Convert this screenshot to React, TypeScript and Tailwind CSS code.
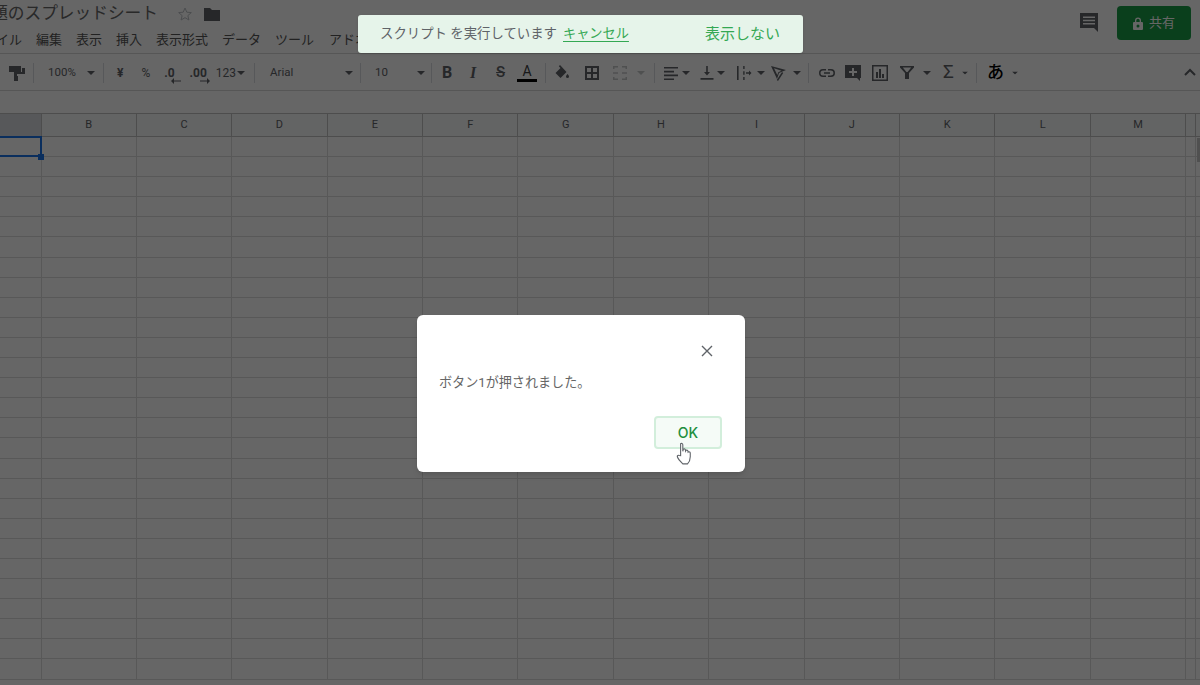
const columns = ["B", "C", "D", "E", "F", "G", "H", "I", "J", "K", "L", "M"];
const rowCount = 27;

function Caret({ className = "" }: { className?: string }) {
  return (
    <svg width="8" height="4" viewBox="0 0 8 4" className={`shrink-0 ${className}`}>
      <path d="M0 0h8L4 4z" fill="currentColor" />
    </svg>
  );
}

function Divider() {
  return <div className="w-px h-[20px] bg-[#dadce0] shrink-0" />;
}

function Glyph({ children }: { children: React.ReactNode }) {
  return (
    <svg width="18" height="18" viewBox="0 0 18 18" className="shrink-0" fill="#5f6368">
      {children}
    </svg>
  );
}

function MenuBar() {
  return (
    <div className="flex items-center h-[26px] text-[13px] text-[#555555] gap-[14px] whitespace-nowrap">
      <span className="w-[22px] overflow-hidden flex justify-end">イル</span>
      <span>編集</span>
      <span>表示</span>
      <span>挿入</span>
      <span>表示形式</span>
      <span>データ</span>
      <span className="mr-[1px]">ツール</span>
      <span>アドオン</span>
    </div>
  );
}

function Toolbar() {
  return (
    <div className="flex items-center h-[38px] pt-[1px] border-t border-b border-[#d8d8d8] text-[#5f6368] text-[11px] relative whitespace-nowrap">
      <div className="w-[33px] flex justify-end pr-[7px]">
        <Glyph>
          <path d="M1 2h12v6H1zM14 4h3v6H9v2h1v5H6v-9h8z" />
        </Glyph>
      </div>
      <Divider />
      <span className="ml-[14px] w-[36px] text-[11.500px]">100%</span>
      <Caret className="ml-[3px]" />
      <div className="ml-[8px]"><Divider /></div>
      <span className="ml-[13px] text-[12px] font-bold">¥</span>
      <span className="ml-[18px] text-[12px]">%</span>
      <span className="ml-[14px] relative text-[12px] font-bold">
        .0
        <svg width="10" height="6" viewBox="0 0 10 6" className="absolute left-[7px] top-[14px]">
          <path d="M10 2.400H3V0L0 3l3 3V3.600h7z" fill="#5f6368" />
        </svg>
      </span>
      <span className="ml-[15px] relative text-[12px] font-bold">
        .00
        <svg width="10" height="6" viewBox="0 0 10 6" className="absolute left-[10px] top-[14px]">
          <path d="M0 2.400h7V0l3 3-3 3V3.600H0z" fill="#5f6368" />
        </svg>
      </span>
      <span className="ml-[9px] text-[12px]">123</span>
      <Caret className="ml-[1px]" />
      <div className="ml-[9px]"><Divider /></div>
      <span className="ml-[15px] w-[75px] text-[11.500px]">Arial</span>
      <Caret />
      <div className="ml-[7px]"><Divider /></div>
      <span className="ml-[14px] w-[42px] text-[11.500px]">10</span>
      <Caret />
      <div className="ml-[6px]"><Divider /></div>
      <span className="ml-[10px] text-[16px] font-bold w-[14px]">B</span>
      <span className="ml-[14px] text-[16px] italic font-bold w-[12px]" style={{ fontFamily: "Liberation Serif" }}>I</span>
      <span className="ml-[14px] text-[15px] font-medium line-through w-[13px]">S</span>
      <div className="ml-[8px] flex flex-col items-center w-[20px]">
        <span className="text-[14px] leading-[14px] text-[#3c4043]">A</span>
        <div className="w-[20px] h-[3px] bg-black mt-[1px]" />
      </div>
      <div className="ml-[8px]"><Divider /></div>
      <div className="ml-[7px]">
        <Glyph>
          <path d="M7 1 5.800 2.200 7.500 4 2.500 9l5 5 6-6zM14.500 10c1 1.300 1.500 2 1.500 2.600a1.500 1.500 0 0 1-3 0c0-.6.500-1.300 1.500-2.600z" />
        </Glyph>
      </div>
      <div className="ml-[12px]">
        <Glyph>
          <path d="M2 2h14v14H2zm2 2v4h4V4zm6 0v4h4V4zM4 10v4h4v-4zm6 0v4h4v-4z" fillRule="evenodd" />
        </Glyph>
      </div>
      <div className="ml-[10px] opacity-35">
        <Glyph>
          <path d="M2 2h5v1.500H3.500V5H2zM11 2h5v3h-1.500V3.500H11zM2 13h1.500v1.500H7V16H2zM14.500 13H16v3h-5v-1.500h3.500zM2 8.300h5v1.400H2zM11 8.300h5v1.400h-5z" />
        </Glyph>
      </div>
      <Caret className="ml-[8px] opacity-35" />
      <div className="ml-[9px]"><Divider /></div>
      <div className="ml-[7px]">
        <Glyph>
          <path d="M2 3h14v1.600H2zM2 6.800h10v1.600H2zM2 10.600h14v1.600H2zM2 14.400h10V16H2z" />
        </Glyph>
      </div>
      <Caret className="ml-[2px]" />
      <div className="ml-[8px]">
        <Glyph>
          <path d="M8.200 2h1.600v6H12l-3 3.500L6 8h2.200zM2.500 14h13v1.800h-13z" />
        </Glyph>
      </div>
      <Caret className="ml-[1px]" />
      <div className="ml-[10px]">
        <Glyph>
          <path d="M2 2h1.600v14H2zM8.200 2h1.400v3H8.200zM8.200 13h1.400v3H8.200zM8.200 7.300h1.400v3.400H8.200zM11 8.200h3V6.500L16.500 9 14 11.500V9.800h-3z" />
        </Glyph>
      </div>
      <Caret className="ml-[4px]" />
      <div className="ml-[5px]">
        <Glyph>
          <path d="M1 2l15 4-7 3-2 6z M4 4.300 7.300 11l1-2.800 3.200-1.400z" fillRule="evenodd" />
          <path d="m12 8 1.200 1L8 17l-1.200-1z" />
        </Glyph>
      </div>
      <Caret className="ml-[5px]" />
      <div className="ml-[7px]"><Divider /></div>
      <div className="ml-[9px]">
        <Glyph>
          <path d="M2.500 9A2.500 2.500 0 0 1 5 6.500h3V5H5a4 4 0 0 0 0 8h3v-1.500H5A2.500 2.500 0 0 1 2.500 9zM6 9.800h6V8.200H6zM13 5h-3v1.500h3a2.500 2.500 0 0 1 0 5h-3V13h3a4 4 0 0 0 0-8z" />
        </Glyph>
      </div>
      <div className="ml-[8px]">
        <Glyph>
          <path d="M1 1h16v13h-1v3l-3-3H1zm7 3v3H5v2h3v3h2V9h3V7h-3V4z" fillRule="evenodd" />
        </Glyph>
      </div>
      <div className="ml-[9px]">
        <Glyph>
          <path d="M1 1h16v16H1zm1.500 1.500v13h13v-13zM5 8h2v6H5zM8 5h2v9H8zM11 10h2v4h-2z" fillRule="evenodd" />
        </Glyph>
      </div>
      <div className="ml-[10px]">
        <Glyph>
          <path d="M1 2h14v1.500L10 9v6H6V9L1 3.500zM3.800 3.500 7.400 8h1.200l3.600-4.500z" fillRule="evenodd" />
        </Glyph>
      </div>
      <Caret className="ml-[6px]" />
      <span className="ml-[12px] text-[19px] text-[#5f6368] w-[12px]">Σ</span>
      <Caret className="ml-[6px] scale-75" />
      <div className="ml-[7px]"><Divider /></div>
      <span className="ml-[10px] text-[17px] text-black font-medium w-[17px]">あ</span>
      <Caret className="ml-[7px] scale-75" />
      <svg width="12" height="8" viewBox="0 0 12 8" className="absolute right-[4px] top-[14px]">
        <path d="M1 7l5-5 5 5" stroke="#5f6368" strokeWidth="2" fill="none" />
      </svg>
    </div>
  );
}

function Grid() {
  return (
    <div className="relative">
      <div className="flex h-[24px] bg-[#f8f9fa] border-t border-b border-[#c0c0c0] text-[11px] text-[#5f6368]">
        <div className="w-[41.500px] shrink-0 bg-[#dadce0] border-r border-[#c0c0c0]" />
        {columns.map((c) => (
          <div
            key={c}
            className="w-[95.400px] shrink-0 border-r border-[#c0c0c0] flex items-center justify-center"
          >
            {c}
          </div>
        ))}
        <div className="w-[10px] shrink-0 border-r border-[#c0c0c0]" />
      </div>
      {Array.from({ length: rowCount }).map((_, i) => (
        <div key={i} className="flex h-[20.100px] border-b border-[#dcdcdc]">
          <div className="w-[41.500px] shrink-0 border-r border-[#dcdcdc]" />
          {columns.map((c) => (
            <div key={c} className="w-[95.400px] shrink-0 border-r border-[#dcdcdc]" />
          ))}
          <div className="w-[10px] shrink-0 border-r border-[#dcdcdc]" />
        </div>
      ))}
      {/* selected cell A1 */}
      <div className="absolute left-0 top-[23px] w-[42px] h-[21px] border-t-2 border-r-2 border-b-2 border-[#1a73e8]" />
      <div className="absolute left-[38px] top-[41px] w-[6px] h-[6px] bg-[#1a73e8]" />
      {/* scrollbar thumb */}
      <div className="absolute left-[1197px] top-[25px] w-[3px] h-[24px] bg-[#c8c8c8]" />
    </div>
  );
}

export default function App() {
  return (
    <div
      className="relative w-[1200px] h-[685px] overflow-hidden bg-white"
      style={{ fontFamily: '"Roboto", "Noto Sans CJK JP", sans-serif' }}
    >
      {/* header */}
      <div className="flex items-center h-[27px] relative">
        <span className="text-[16.700px] text-[#666666] whitespace-nowrap w-[158px] overflow-hidden flex justify-end">
          題のスプレッドシート
        </span>
        <svg width="16" height="16" viewBox="0 0 24 24" className="ml-[19px]" fill="none" stroke="#bdc1c6" strokeWidth="1.500">
          <path d="M12 3l2.700 6.300 6.800.6-5.200 4.500 1.600 6.600L12 17.500 6.100 21l1.600-6.600L2.500 9.900l6.800-.6z" />
        </svg>
        <svg width="18" height="16" viewBox="0 0 18 16" className="ml-[10px]" fill="#5f6368">
          <path d="M1 2h6l2 2h8v11H1z" />
        </svg>
        <svg width="20" height="20" viewBox="0 0 20 20" className="absolute left-[1079px] top-[12px]" fill="#5f6368">
          <path d="M1 1h18v19l-4-4H1zM4 4.500v1.500h12V4.500zM4 7.800v1.500h12V7.800zM4 11v1.500h12V11z" fillRule="evenodd" />
        </svg>
        <div className="absolute left-[1117px] top-[6px] w-[74px] h-[34px] rounded-[4px] bg-[#199d46] flex items-center justify-center gap-[6px] text-[13px] text-white">
          <svg width="10" height="13" viewBox="0 0 10 13" fill="white">
            <path d="M1 5h1V3.500a3 3 0 0 1 6 0V5h1a1 1 0 0 1 1 1v6a1 1 0 0 1-1 1H1a1 1 0 0 1-1-1V6a1 1 0 0 1 1-1zM3.300 5h3.400V3.500a1.700 1.700 0 0 0-3.400 0zM5 7.500a1.500 1.500 0 1 0 0 3 1.500 1.500 0 0 0 0-3z" fillRule="evenodd" />
          </svg>
          共有
        </div>
      </div>
      <MenuBar />
      <Toolbar />
      <div className="h-[22px]" />
      <Grid />

      {/* dim overlay */}
      <div className="absolute inset-0 bg-[rgba(0,0,0,0.6)]" />

      {/* script toast */}
      <div className="absolute left-[358px] top-[15px] w-[445px] h-[38px] bg-[#e6f4ea] rounded-[3px] flex items-center pl-[22px] text-[13.400px] text-[#5f6368] whitespace-nowrap shadow-sm">
        <span>スクリプト を実行しています</span>
        <span className="ml-[6px] text-[#34a853] underline underline-offset-[3px] text-[13.200px]">キャンセル</span>
        <span className="ml-[76px] text-[#34a853] text-[15px]">表示しない</span>
      </div>

      {/* dialog */}
      <div className="absolute left-[417px] top-[315px] w-[328px] h-[157px] bg-white rounded-[6px] shadow-md">
        <svg width="12" height="12" viewBox="0 0 12 12" className="absolute left-[284px] top-[30px]">
          <path d="M1 1l10 10M11 1L1 11" stroke="#5f6368" strokeWidth="1.400" />
        </svg>
        <p className="absolute left-[22px] top-[59px] text-[13.100px] leading-[18px] text-[#666666] whitespace-nowrap">
          ボタン1が押されました。
        </p>
        <div
          className="absolute left-[237px] top-[101px] w-[68px] h-[33px] rounded-[4px] border-2 border-[#d2eedb] bg-[#f5fbf7] flex items-center justify-center text-[14px] font-medium text-[#1e8e3e]"
          style={{ fontFamily: "Inter, sans-serif" }}
        >
          OK
        </div>
        {/* hand pointer */}
        <svg width="18" height="23" viewBox="0 0 16 21" className="absolute left-[259px] top-[127px]">
          <path
            d="M4 1.500c.8-.6 1.900-.2 2 1v6l.5-2c.9-.5 1.800-.1 1.900.8l.1 1 .4-.8c.9-.3 1.700.1 1.800 1l.1.8.4-.4c.8-.2 1.500.3 1.600 1.100v3.500c0 2.500-1.500 5.500-2.500 6.500H6c-1-1-4.500-5-5-6.500-.3-1 .8-1.800 1.700-1.200L4 12.500z"
            fill="white"
            stroke="#5f6368"
            strokeWidth="1"
          />
        </svg>
      </div>
    </div>
  );
}
